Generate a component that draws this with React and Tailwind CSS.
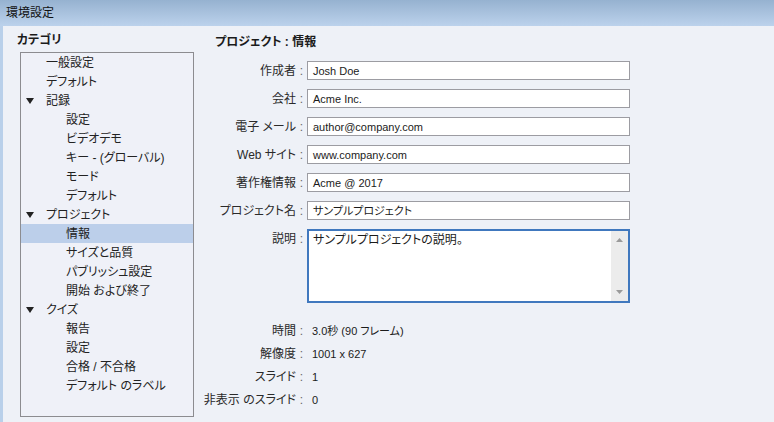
import React from 'react';

const tree = [
  { label: '一般設定', level: 1 },
  { label: 'デフォルト', level: 1 },
  { label: '記録', level: 1, open: true },
  { label: '設定', level: 2 },
  { label: 'ビデオデモ', level: 2 },
  { label: 'キー - (グローバル)', level: 2 },
  { label: 'モード', level: 2 },
  { label: 'デフォルト', level: 2 },
  { label: 'プロジェクト', level: 1, open: true },
  { label: '情報', level: 2, selected: true },
  { label: 'サイズと品質', level: 2 },
  { label: 'パブリッシュ設定', level: 2 },
  { label: '開始 および終了', level: 2 },
  { label: 'クイズ', level: 1, open: true },
  { label: '報告', level: 2 },
  { label: '設定', level: 2 },
  { label: '合格 / 不合格', level: 2 },
  { label: 'デフォルト のラベル', level: 2 },
];

const fields = [
  { label: '作成者', value: 'Josh Doe' },
  { label: '会社', value: 'Acme Inc.' },
  { label: '電子 メール', value: 'author@company.com' },
  { label: 'Web サイト', value: 'www.company.com' },
  { label: '著作権情報', value: 'Acme @ 2017' },
  { label: 'プロジェクト名', value: 'サンプルプロジェクト' },
];

const info = [
  { label: '時間', value: '3.0秒 (90 フレーム)' },
  { label: '解像度', value: '1001 x 627' },
  { label: 'スライド', value: '1' },
  { label: '非表示 のスライド', value: '0' },
];

const Triangle = () => (
  <svg width="8" height="6" viewBox="0 0 8 6" className="mr-[12px]">
    <path d="M0 0 L8 0 L4 6 Z" fill="#222" />
  </svg>
);

const Label = ({ children }) => (
  <div className="flex items-center">
    <div className="w-[96px] text-right whitespace-nowrap text-[#2a2a2a]">{children}</div>
    <div className="w-[11px] text-center text-[#666]">:</div>
  </div>
);

export default function App() {
  return (
    <div className="w-[774px] h-[422px] overflow-hidden bg-[#eef1f7] text-[12px] leading-[16px] text-[#1b1b1b] font-['Liberation_Sans','Noto_Sans_CJK_JP',sans-serif] [font-feature-settings:'palt']">
      {/* title bar */}
      <div className="h-[26px] bg-gradient-to-b from-[#96b2d0] to-[#bcd2ec] flex items-center pl-[6px] text-[#111]">
        環境設定
      </div>

      <div className="flex h-[396px]">
        <div className="w-[3px] bg-[#b9d0ea]" />

        {/* categories */}
        <div className="w-[197px] pt-[6px]">
          <div className="ml-[14px] font-bold h-[16px]">カテゴリ</div>
          <div className="ml-[17px] mt-[4px] w-[174px] h-[365px] border border-[#8c8c90] bg-[#eff1f8]">
            {tree.map((item, i) => (
              <div
                key={i}
                className={`h-[19px] flex items-center whitespace-nowrap text-[#222] ${
                  item.level === 1 ? 'pl-[25px]' : 'pl-[45px]'
                } ${item.selected ? 'bg-[#bccfea]' : ''}`}
              >
                {item.open && (
                  <span className="-ml-[20px] flex">
                    <Triangle />
                  </span>
                )}
                {item.label}
              </div>
            ))}
          </div>
        </div>

        {/* details */}
        <div className="flex-1 pt-[8px]">
          <div className="ml-[15px] font-bold h-[16px]">プロジェクト : 情報</div>

          <div className="mt-[11px] flex flex-col gap-[9px]">
            {fields.map((f) => (
              <div key={f.label} className="flex items-center h-[19px]">
                <Label>{f.label}</Label>
                <div className="w-[323px] h-[19px] border border-[#9c9ca2] bg-white pl-[5px] flex items-center text-[11px] whitespace-nowrap">
                  {f.value}
                </div>
              </div>
            ))}

            <div className="flex items-start">
              <div className="pt-[2px]">
                <Label>説明</Label>
              </div>
              <div className="w-[323px] h-[74px] border-2 border-[#4078be] bg-white flex">
                <div className="flex-1 pl-[4px] pt-[1px]">サンプルプロジェクトの説明。</div>
                <div className="w-[17px] bg-[#ececec] flex flex-col items-center justify-between py-[7px]">
                  <svg width="7" height="4" viewBox="0 0 7 4">
                    <path d="M0 4 L3.5 0 L7 4 Z" fill="#9a9a9a" />
                  </svg>
                  <svg width="7" height="4" viewBox="0 0 7 4">
                    <path d="M0 0 L7 0 L3.5 4 Z" fill="#9a9a9a" />
                  </svg>
                </div>
              </div>
            </div>
          </div>

          <div className="mt-[20px] flex flex-col gap-[7px]">
            {info.map((r) => (
              <div key={r.label} className="flex items-center h-[16px]">
                <Label>{r.label}</Label>
                <div className="pl-[5px] whitespace-nowrap text-[11px]">{r.value}</div>
              </div>
            ))}
          </div>
        </div>
      </div>
    </div>
  );
}
